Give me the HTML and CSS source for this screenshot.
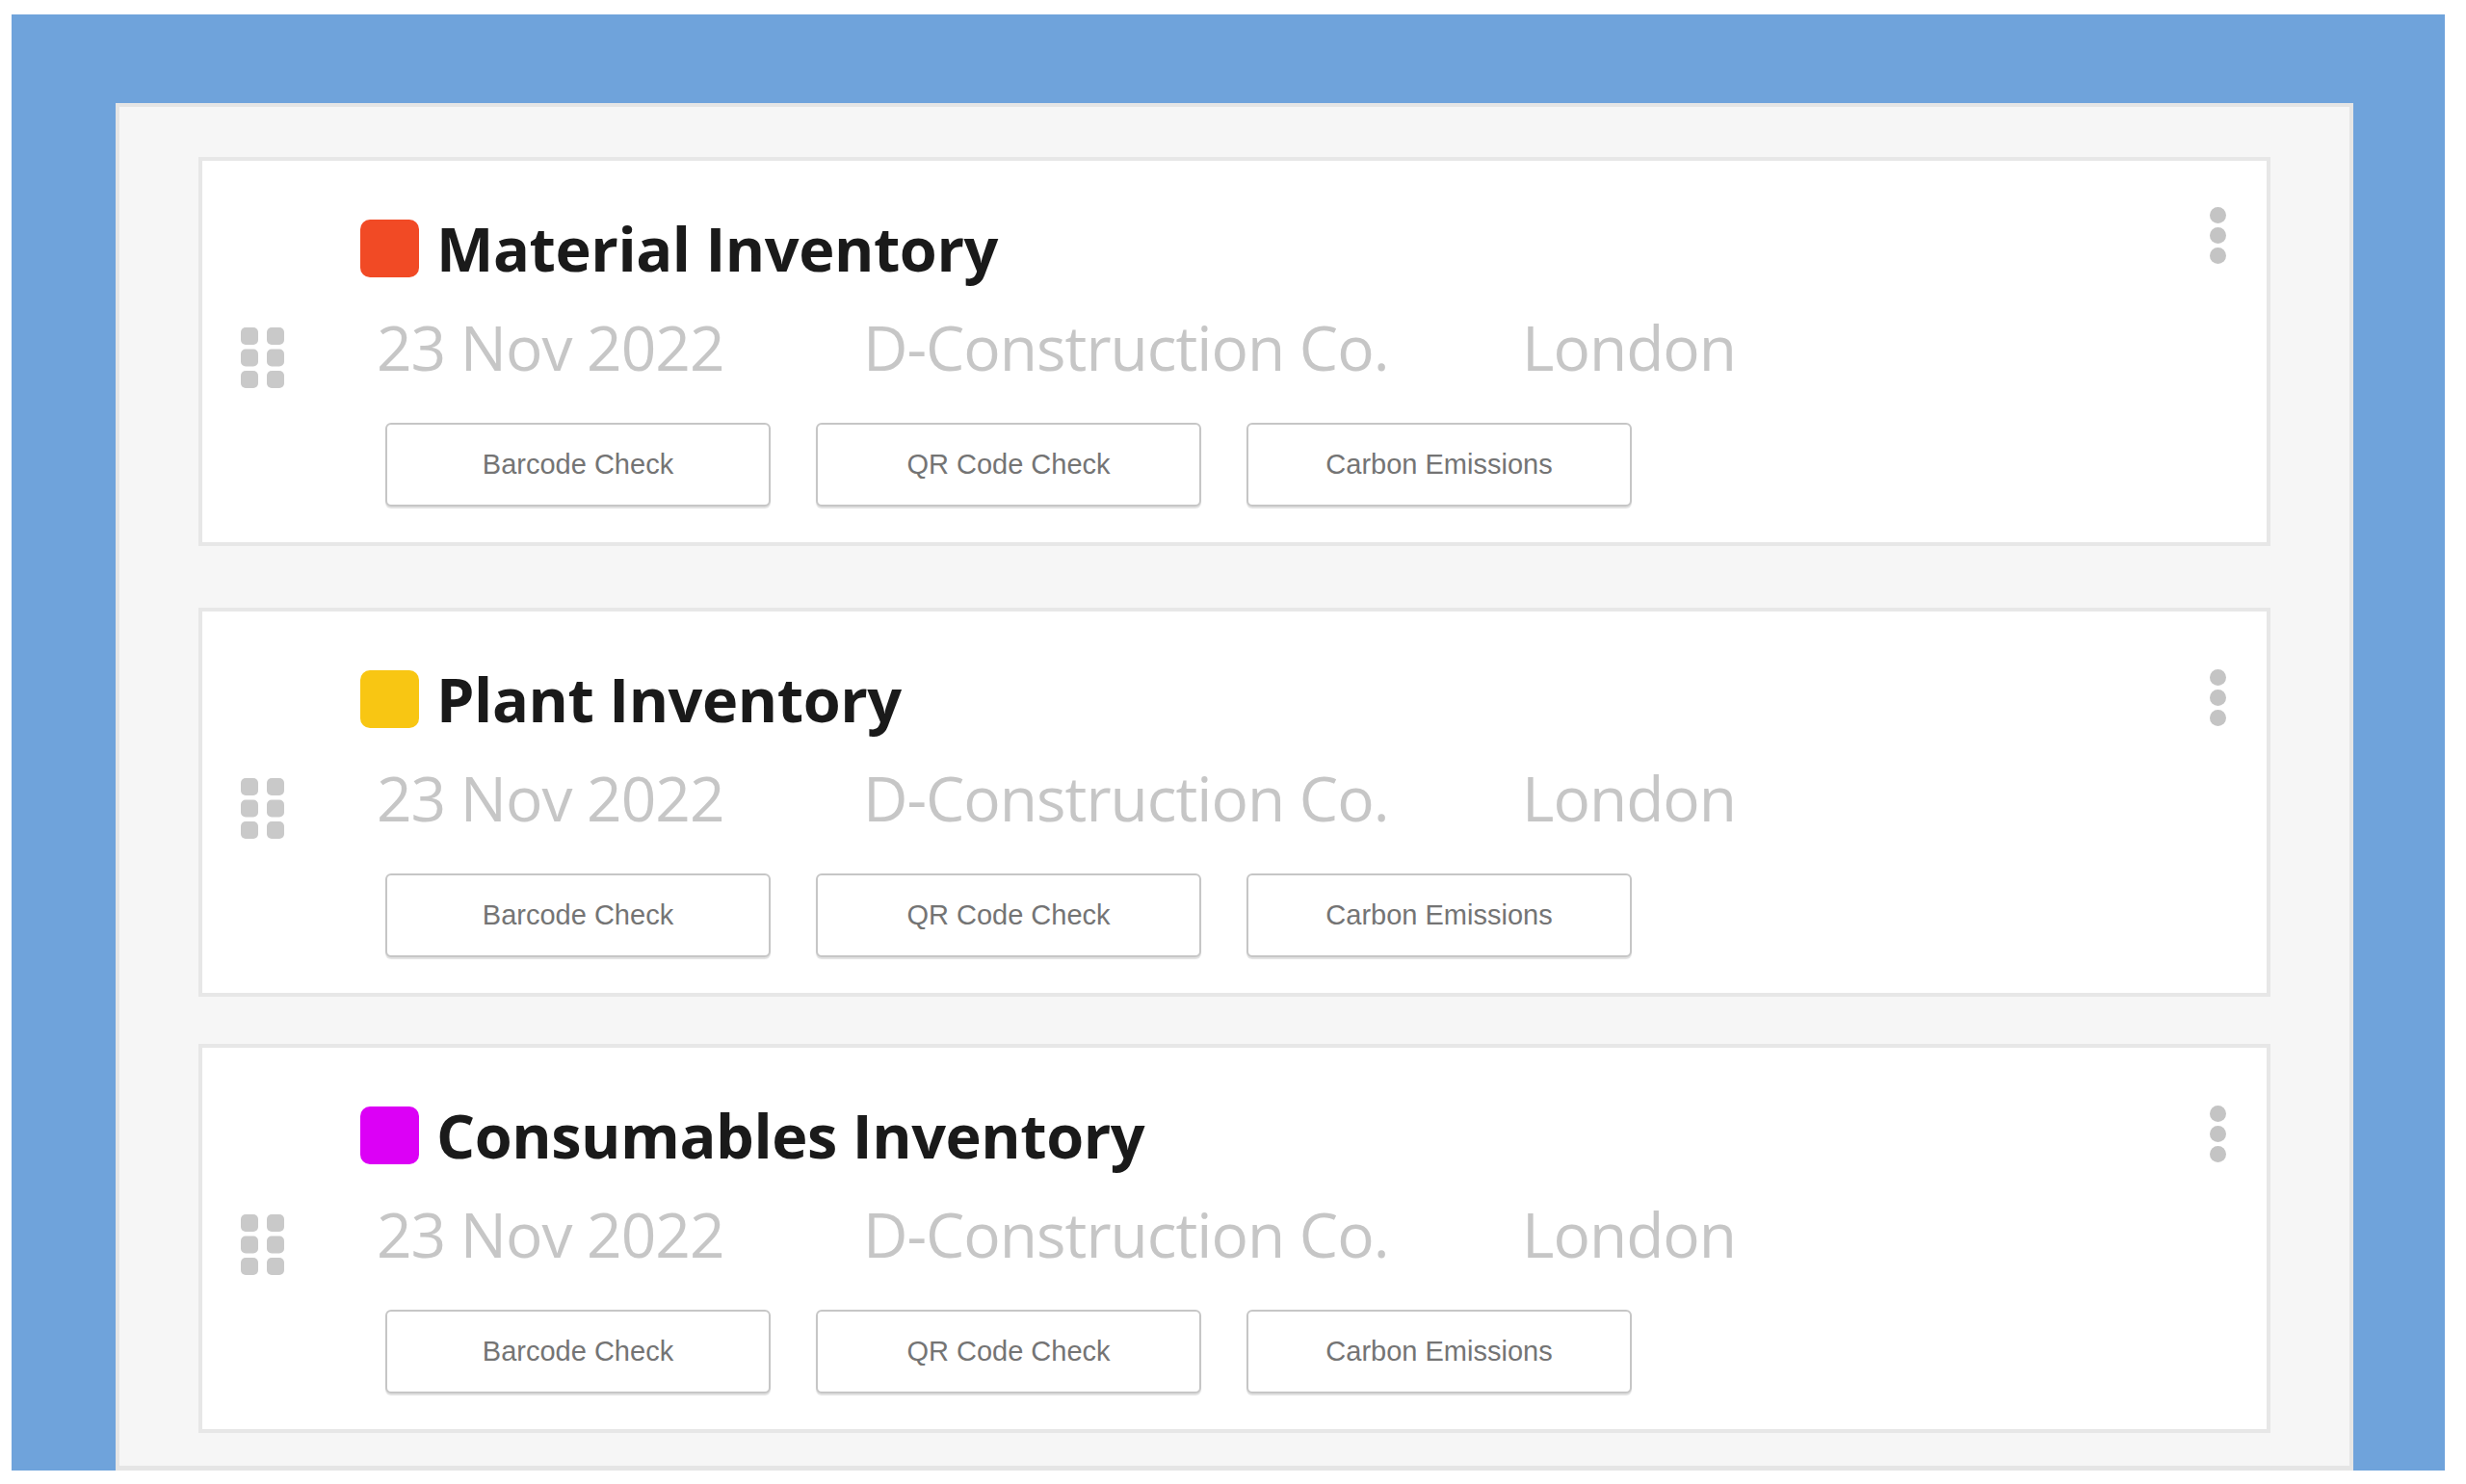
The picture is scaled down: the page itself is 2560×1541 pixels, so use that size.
FILE: index.html
```html
<!DOCTYPE html>
<html lang="en">
<head>
<meta charset="utf-8">
<title>Inventories</title>
<link rel="stylesheet" href="styles.css">
</head>
<body>
<div class="frame">
  <div class="panel">
    <div class="card card-1">
      <div class="title-row">
        <span class="swatch swatch-red"></span>
        <h2 class="title">Material Inventory</h2>
      </div>
      <button class="kebab" aria-label="More">
        <svg width="17" height="59" viewBox="0 0 17 59"><circle cx="8.5" cy="8.5" r="8.5"/><circle cx="8.5" cy="29.5" r="8.5"/><circle cx="8.5" cy="50.5" r="8.5"/></svg>
      </button>
      <div class="handle">
        <svg width="45" height="63" viewBox="0 0 45 63"><rect x="0" y="0" width="18" height="18" rx="5"/><rect x="27" y="0" width="18" height="18" rx="5"/><rect x="0" y="22.5" width="18" height="18" rx="5"/><rect x="27" y="22.5" width="18" height="18" rx="5"/><rect x="0" y="45" width="18" height="18" rx="5"/><rect x="27" y="45" width="18" height="18" rx="5"/></svg>
      </div>
      <div class="meta">
        <span class="meta-date">23 Nov 2022</span>
        <span class="meta-company">D-Construction Co.</span>
        <span class="meta-city">London</span>
      </div>
      <div class="actions">
        <button class="btn">Barcode Check</button>
        <button class="btn">QR Code Check</button>
        <button class="btn">Carbon Emissions</button>
      </div>
    </div>

    <div class="card card-2">
      <div class="title-row">
        <span class="swatch swatch-yellow"></span>
        <h2 class="title">Plant Inventory</h2>
      </div>
      <button class="kebab kebab-low" aria-label="More">
        <svg width="17" height="59" viewBox="0 0 17 59"><circle cx="8.5" cy="8.5" r="8.5"/><circle cx="8.5" cy="29.5" r="8.5"/><circle cx="8.5" cy="50.5" r="8.5"/></svg>
      </button>
      <div class="handle">
        <svg width="45" height="63" viewBox="0 0 45 63"><rect x="0" y="0" width="18" height="18" rx="5"/><rect x="27" y="0" width="18" height="18" rx="5"/><rect x="0" y="22.5" width="18" height="18" rx="5"/><rect x="27" y="22.5" width="18" height="18" rx="5"/><rect x="0" y="45" width="18" height="18" rx="5"/><rect x="27" y="45" width="18" height="18" rx="5"/></svg>
      </div>
      <div class="meta">
        <span class="meta-date">23 Nov 2022</span>
        <span class="meta-company">D-Construction Co.</span>
        <span class="meta-city">London</span>
      </div>
      <div class="actions">
        <button class="btn">Barcode Check</button>
        <button class="btn">QR Code Check</button>
        <button class="btn">Carbon Emissions</button>
      </div>
    </div>

    <div class="card card-3">
      <div class="title-row">
        <span class="swatch swatch-magenta"></span>
        <h2 class="title">Consumables Inventory</h2>
      </div>
      <button class="kebab kebab-low" aria-label="More">
        <svg width="17" height="59" viewBox="0 0 17 59"><circle cx="8.5" cy="8.5" r="8.5"/><circle cx="8.5" cy="29.5" r="8.5"/><circle cx="8.5" cy="50.5" r="8.5"/></svg>
      </button>
      <div class="handle">
        <svg width="45" height="63" viewBox="0 0 45 63"><rect x="0" y="0" width="18" height="18" rx="5"/><rect x="27" y="0" width="18" height="18" rx="5"/><rect x="0" y="22.5" width="18" height="18" rx="5"/><rect x="27" y="22.5" width="18" height="18" rx="5"/><rect x="0" y="45" width="18" height="18" rx="5"/><rect x="27" y="45" width="18" height="18" rx="5"/></svg>
      </div>
      <div class="meta">
        <span class="meta-date">23 Nov 2022</span>
        <span class="meta-company">D-Construction Co.</span>
        <span class="meta-city">London</span>
      </div>
      <div class="actions">
        <button class="btn">Barcode Check</button>
        <button class="btn">QR Code Check</button>
        <button class="btn">Carbon Emissions</button>
      </div>
    </div>
  </div>
</div>
</body>
</html>
```

FILE: styles.css
```css
* {
  box-sizing: border-box;
}

html, body {
  margin: 0;
  padding: 0;
  background: #ffffff;
}

body {
  font-family: "Open Sans", "Noto Sans", "DejaVu Sans", sans-serif;
  padding: 15px 22px 15px 12px;
}

.frame {
  background: #6fa3db;
  padding: 92px 95px 0 108px;
}

.panel {
  background: #f6f6f6;
  border: 4px solid #e5e5e5;
  border-bottom-width: 5px;
  padding: 52px 82px 34px 82px;
  display: flex;
  flex-direction: column;
}

.card {
  background: #ffffff;
  border: 4px solid #e7e7e7;
  padding: 48px 42px 37px 40px;
  display: grid;
  grid-template-columns: 45px 1fr 17px;
  column-gap: 79px;
  align-items: start;
}

.card-1 {
  margin-bottom: 64px;
}

.card-2 {
  margin-bottom: 49px;
}

.title-row {
  grid-column: 2;
  grid-row: 1;
  display: flex;
  align-items: center;
  gap: 18px;
  margin-top: 13px;
  height: 60px;
}

.swatch {
  width: 61px;
  height: 60px;
  border-radius: 10px;
  flex: none;
}

.swatch-red {
  background: #f14a25;
}

.swatch-yellow {
  background: #f8c613;
}

.swatch-magenta {
  background: #dc00f6;
}

.title {
  margin: 0;
  font-size: 63px;
  line-height: 60px;
  font-weight: 700;
  letter-spacing: -0.45px;
  color: #1a1a1a;
  white-space: nowrap;
}

.kebab {
  grid-column: 3;
  grid-row: 1;
  background: none;
  border: 0;
  padding: 0;
  margin: 0;
  width: 17px;
  height: 59px;
  display: block;
  cursor: pointer;
}

.kebab-low {
  margin-top: 12px;
}

.kebab svg {
  display: block;
  fill: #c4c4c4;
}

.handle {
  grid-column: 1;
  grid-row: 2 / span 2;
  margin-top: 52px;
  width: 45px;
  height: 63px;
}

.handle svg {
  display: block;
  fill: #c9c9c9;
}

.meta {
  grid-column: 2 / span 2;
  grid-row: 2;
  margin-top: 41px;
  padding-left: 17px;
  display: flex;
  font-size: 64px;
  line-height: 64px;
  letter-spacing: -1px;
  color: #c6c6c6;
  white-space: nowrap;
}

.meta-date {
  width: 505px;
}

.meta-company {
  width: 684px;
}

.actions {
  grid-column: 2 / span 2;
  grid-row: 3;
  margin-top: 46px;
  padding-left: 26px;
  display: flex;
  gap: 47px;
}

.btn {
  width: 400px;
  height: 87px;
  background: #ffffff;
  border: 2px solid #c6c6c6;
  border-radius: 6px;
  box-shadow: 0 2px 1px rgba(0, 0, 0, 0.12);
  font-family: "Liberation Sans", Arial, sans-serif;
  font-size: 29px;
  color: #747474;
  padding: 0;
  cursor: pointer;
}
```
